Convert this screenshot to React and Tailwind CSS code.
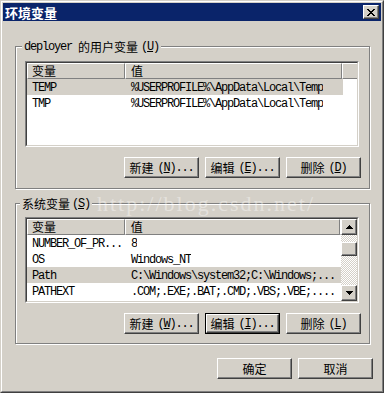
import React from "react";

const mono = "font-['Liberation_Mono',monospace] tracking-[-1.2px]";

function M({ children, className = "" }) {
  return <span className={`${mono} ${className}`}>{children}</span>;
}

function Raised({ className = "", children }) {
  return (
    <div
      className={`bg-[#d4d0c8] border border-t-white border-l-white border-r-[#404040] border-b-[#404040] shadow-[inset_-1px_-1px_0_#808080] flex items-center justify-center ${className}`}
    >
      {children}
    </div>
  );
}

function Btn({ children, def }) {
  if (def) {
    return (
      <div className="w-[75px] h-[21px] border border-black">
        <Raised className="w-full h-full text-[12px] leading-none text-black">{children}</Raised>
      </div>
    );
  }
  return <Raised className="w-[75px] h-[21px] text-[12px] leading-none text-black">{children}</Raised>;
}

function Lbl({ zh, k }) {
  return (
    <span className="flex items-center">
      <span>{zh}</span>
      <M className="ml-[4px]">
        (<span className="underline">{k}</span>)...
      </M>
    </span>
  );
}

function Arrow({ up }) {
  return (
    <svg width="7" height="4" viewBox="0 0 7 4">
      {up ? (
        <path d="M3 0h1v1h1v1h1v1h1v1H0V3h1V2h1V1h1z" fill="#000" />
      ) : (
        <path d="M0 0h7v1H6v1H5v1H4v1H3V3H2V2H1V1H0z" fill="#000" />
      )}
    </svg>
  );
}

function Scrollbar() {
  return (
    <div className="w-[16px] h-full flex flex-col bg-[repeating-conic-gradient(#d4d0c8_0_25%,#ffffff_0_50%)] bg-[length:2px_2px]">
      <Raised className="w-[16px] h-[16px] shrink-0">
        <Arrow up />
      </Raised>
      <div className="h-[7px] shrink-0" />
      <Raised className="w-[16px] h-[14px] shrink-0" />
      <div className="flex-1" />
      <Raised className="w-[16px] h-[16px] shrink-0">
        <Arrow />
      </Raised>
    </div>
  );
}

function List({ rows, scroll }) {
  const c2 = scroll ? "w-[216px]" : "w-[217px]";
  return (
    <div className="ml-[9px] w-[334px] h-[86px] border border-t-[#808080] border-l-[#808080] border-r-white border-b-white">
      <div className="h-full border border-t-[#404040] border-l-[#404040] border-r-[#d4d0c8] border-b-[#d4d0c8] bg-white flex overflow-hidden">
        <div className="flex-1 flex flex-col min-w-0">
          <div className="h-[16px] shrink-0 flex bg-[#d4d0c8] text-[12px] leading-none">
            <div className="w-[98px] border-t border-t-white border-l border-l-white border-r border-r-[#808080] border-b border-b-[#808080] flex items-center pl-[4px]">
              变量
            </div>
            <div className={`${c2} border-t border-t-white border-l border-l-white border-r border-r-[#808080] border-b border-b-[#808080] flex items-center pl-[5px]`}>
              值
            </div>
            <div className="flex-1 border-t border-t-white border-l border-l-white border-b border-b-[#808080]" />
          </div>
          {rows.map((r, i) => (
            <div
              key={i}
              className={`h-[16px] shrink-0 flex items-center text-[12px] leading-none ${scroll ? "w-[315px]" : "w-[316px]"} ${r[2] ? "bg-[#d4d0c8]" : ""}`}
            >
              <div className="w-[98px] pl-[5px] whitespace-nowrap overflow-hidden">
                <M>{r[0]}</M>
              </div>
              <div className="pl-[6px] whitespace-nowrap overflow-hidden">
                <M>{r[1]}</M>
              </div>
            </div>
          ))}
        </div>
        {scroll && <Scrollbar />}
      </div>
    </div>
  );
}

function Group({ label, labelMl, children, mt, listMt }) {
  return (
    <div
      className={`ml-[12px] w-[355px] border border-[#808080] shadow-[1px_1px_0_#ffffff,inset_1px_1px_0_#ffffff] ${mt}`}
    >
      <div className={`-mt-[7px] ${labelMl} w-fit px-[2px] bg-[#d4d0c8] h-[14px] flex items-center text-[12px] leading-none`}>
        {label}
      </div>
      <div className={listMt}>{children}</div>
    </div>
  );
}

export default function App() {
  const userRows = [
    ["TEMP", "%USERPROFILE%\\AppData\\Local\\Temp", true],
    ["TMP", "%USERPROFILE%\\AppData\\Local\\Temp", false],
  ];
  const sysRows = [
    ["NUMBER_OF_PR...", "8", false],
    ["OS", "Windows_NT", false],
    ["Path", "C:\\Windows\\system32;C:\\Windows;...", true],
    ["PATHEXT", ".COM;.EXE;.BAT;.CMD;.VBS;.VBE;....", false],
  ];
  return (
    <div className="relative w-[384px] h-[393px] font-['Noto_Sans_CJK_SC',sans-serif] text-black select-none">
      <div className="w-full h-full border border-t-[#d4d0c8] border-l-[#d4d0c8] border-r-[#404040] border-b-[#404040]">
        <div className="w-full h-full border border-t-white border-l-white border-r-[#808080] border-b-[#808080] bg-[#d4d0c8] p-[1px] flex flex-col">
          {/* title bar */}
          <div className="h-[18px] shrink-0 bg-[#0a246a] flex items-center justify-between pl-[2px] pr-[2px]">
            <span className="text-white font-bold text-[13px] leading-none tracking-[0px]">环境变量</span>
            <Raised className="w-[16px] h-[14px]">
              <svg width="8" height="7" viewBox="0 0 8 7">
                <path
                  d="M0 0h2v1h1v1h2V1h1V0h2v1H7v1H6v1H5v1h1v1h1v1h1v1H6V6H5V5H3v1H2v1H0V6h1V5h1V4h1V3H2V2H1V1H0z"
                  fill="#000"
                />
              </svg>
            </Raised>
          </div>

          {/* user vars */}
          <Group
            mt="mt-[25px]"
            labelMl="ml-[6px]"
            listMt="mt-[7px]"
            label={
              <>
                <M>deployer</M>
                <span className="ml-[6px]">的用户变量</span>
                <M className="ml-[3px]">
                  (<span className="underline">U</span>)
                </M>
              </>
            }
          >
            <List rows={userRows} />
            <div className="flex justify-end gap-[6px] mr-[8px] mt-[10px] mb-[10px]">
              <Btn>
                <Lbl zh="新建" k="N" />
              </Btn>
              <Btn>
                <Lbl zh="编辑" k="E" />
              </Btn>
              <Btn>
                <span className="flex items-center">
                  <span>删除</span>
                  <M className="ml-[4px]">
                    (<span className="underline">D</span>)
                  </M>
                </span>
              </Btn>
            </div>
          </Group>

          {/* system vars */}
          <Group
            mt="mt-[14px]"
            labelMl="ml-[4px]"
            listMt="mt-[6px]"
            label={
              <>
                <span>系统变量</span>
                <M className="ml-[2px]">
                  (<span className="underline">S</span>)
                </M>
              </>
            }
          >
            <List rows={sysRows} scroll />
            <div className="flex justify-end gap-[6px] mr-[8px] mt-[10px] mb-[9px]">
              <Btn>
                <Lbl zh="新建" k="W" />
              </Btn>
              <Btn def>
                <Lbl zh="编辑" k="I" />
              </Btn>
              <Btn>
                <span className="flex items-center">
                  <span>删除</span>
                  <M className="ml-[4px]">
                    (<span className="underline">L</span>)
                  </M>
                </span>
              </Btn>
            </div>
          </Group>

          <div className="flex justify-end gap-[6px] mr-[8px] mt-[14px]">
            <Btn>确定</Btn>
            <Btn>取消</Btn>
          </div>
        </div>
      </div>
      <div className="absolute left-[97px] top-[193px] font-['Liberation_Serif',serif] text-[22px] leading-none tracking-[2px] text-white/40 pointer-events-none">
        http://blog.csdn.net/
      </div>
    </div>
  );
}
